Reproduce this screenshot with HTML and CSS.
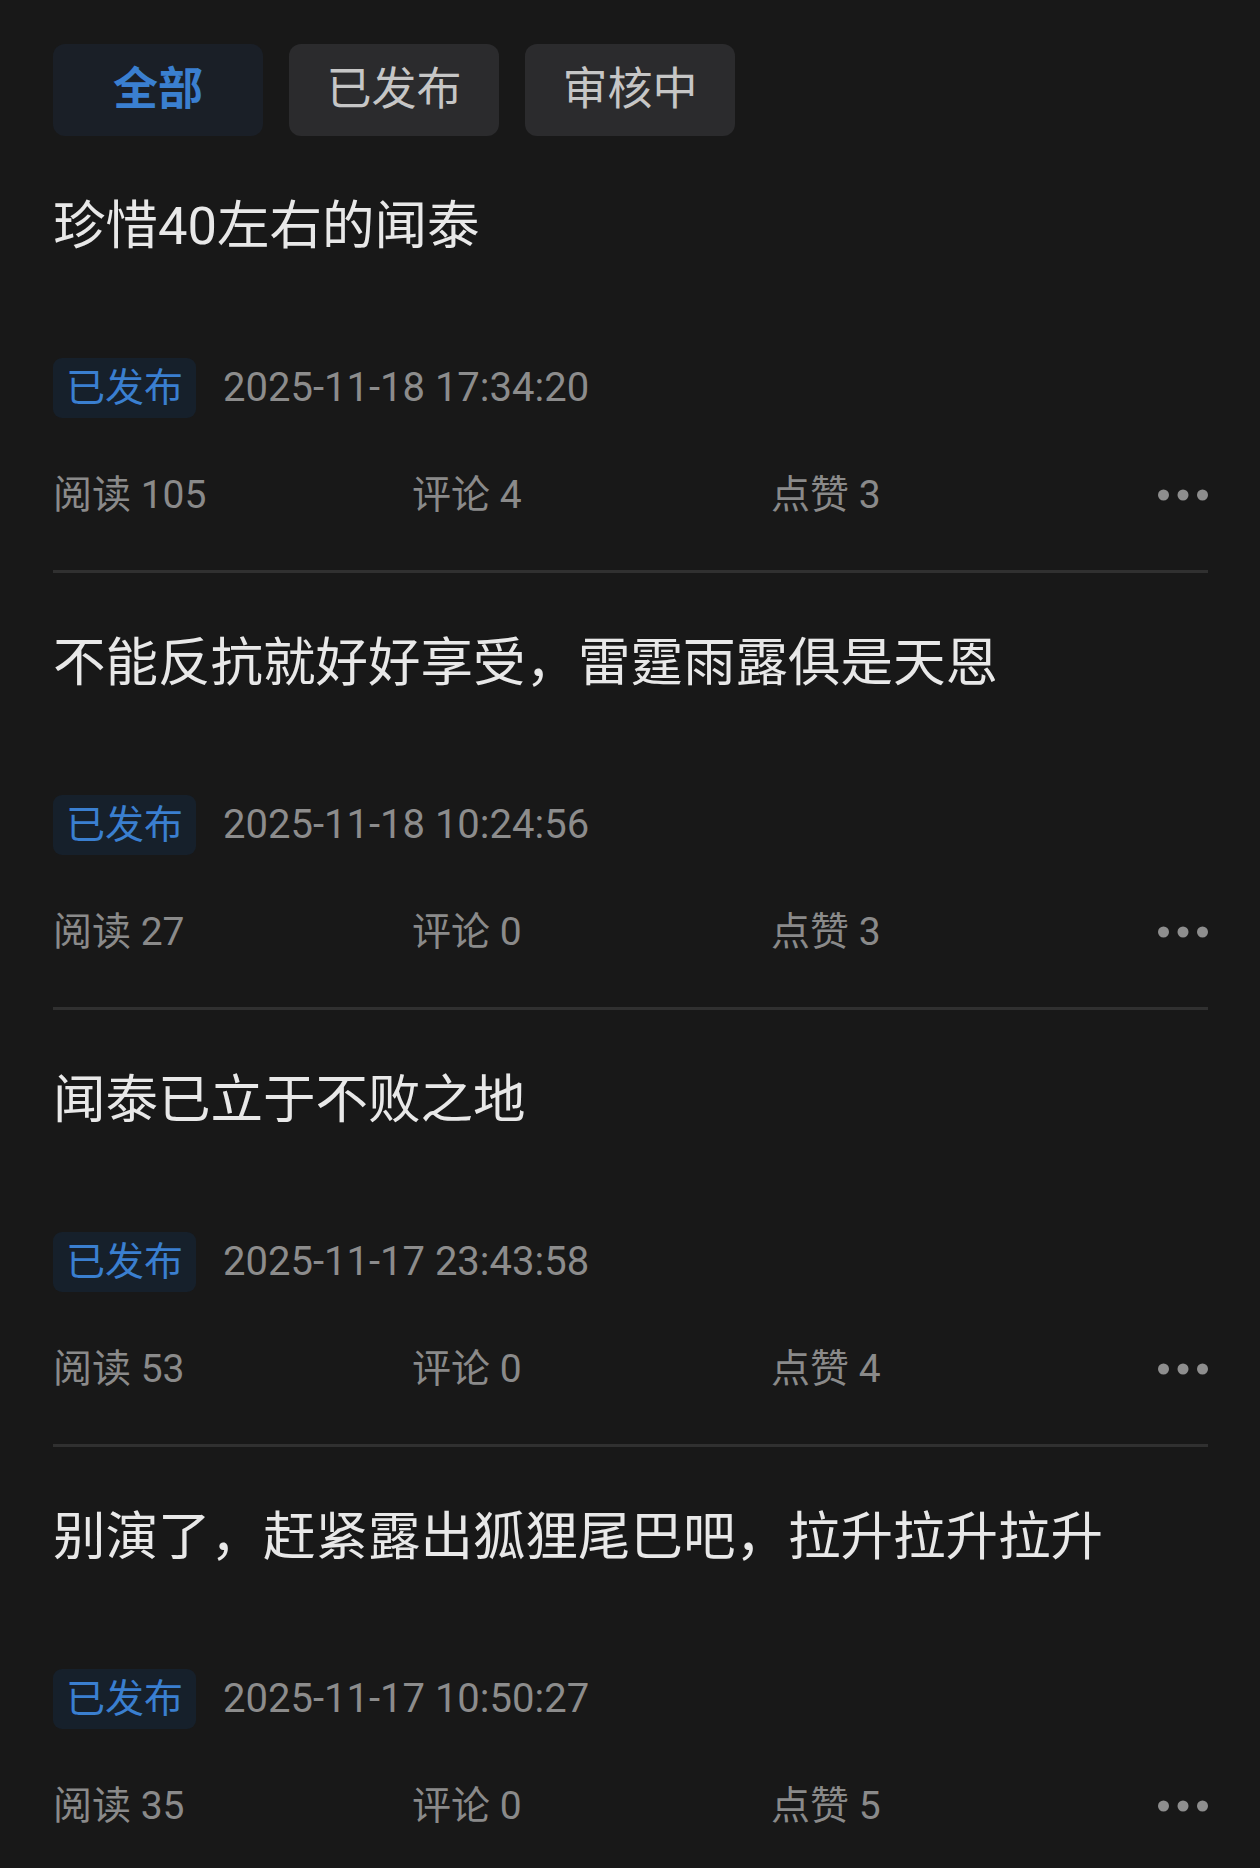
FILE: index.html
```html
<!DOCTYPE html>
<html lang="zh-CN">
<head>
<meta charset="utf-8">
<title>作品列表</title>
<link rel="stylesheet" href="styles.css">
</head>
<body>
<div class="page">
  <div class="tabs">
    <div class="tab tab-active">全部</div>
    <div class="tab">已发布</div>
    <div class="tab">审核中</div>
  </div>

  <div class="item">
    <div class="title">珍惜40左右的闻泰</div>
    <div class="meta"><span class="badge">已发布</span><span class="date">2025-11-18 17:34:20</span></div>
    <div class="stats">
      <span class="stat">阅读 105</span>
      <span class="stat">评论 4</span>
      <span class="stat">点赞 3</span>
      <span class="more"><svg width="50" height="12" viewBox="0 0 50 12"><circle cx="5.5" cy="6" r="5.5"/><circle cx="25" cy="6" r="5.5"/><circle cx="44.5" cy="6" r="5.5"/></svg></span>
    </div>
  </div>

  <div class="item">
    <div class="title">不能反抗就好好享受，雷霆雨露俱是天恩</div>
    <div class="meta"><span class="badge">已发布</span><span class="date">2025-11-18 10:24:56</span></div>
    <div class="stats">
      <span class="stat">阅读 27</span>
      <span class="stat">评论 0</span>
      <span class="stat">点赞 3</span>
      <span class="more"><svg width="50" height="12" viewBox="0 0 50 12"><circle cx="5.5" cy="6" r="5.5"/><circle cx="25" cy="6" r="5.5"/><circle cx="44.5" cy="6" r="5.5"/></svg></span>
    </div>
  </div>

  <div class="item">
    <div class="title">闻泰已立于不败之地</div>
    <div class="meta"><span class="badge">已发布</span><span class="date">2025-11-17 23:43:58</span></div>
    <div class="stats">
      <span class="stat">阅读 53</span>
      <span class="stat">评论 0</span>
      <span class="stat">点赞 4</span>
      <span class="more"><svg width="50" height="12" viewBox="0 0 50 12"><circle cx="5.5" cy="6" r="5.5"/><circle cx="25" cy="6" r="5.5"/><circle cx="44.5" cy="6" r="5.5"/></svg></span>
    </div>
  </div>

  <div class="item">
    <div class="title">别演了，赶紧露出狐狸尾巴吧，拉升拉升拉升</div>
    <div class="meta"><span class="badge">已发布</span><span class="date">2025-11-17 10:50:27</span></div>
    <div class="stats">
      <span class="stat">阅读 35</span>
      <span class="stat">评论 0</span>
      <span class="stat">点赞 5</span>
      <span class="more"><svg width="50" height="12" viewBox="0 0 50 12"><circle cx="5.5" cy="6" r="5.5"/><circle cx="25" cy="6" r="5.5"/><circle cx="44.5" cy="6" r="5.5"/></svg></span>
    </div>
  </div>
</div>
</body>
</html>
```

FILE: styles.css
```css
html, body {
  margin: 0;
  padding: 0;
  background: #181818;
}

body {
  font-family: Roboto, "Noto Sans CJK SC", sans-serif;
  color: #e8e8e8;
}

.page {
  padding: 44px 52px 0 53px;
  min-height: 1868px;
  box-sizing: border-box;
  overflow: hidden;
}

.tabs {
  display: flex;
  gap: 26px;
}

.tab {
  width: 210px;
  height: 92px;
  border-radius: 12px;
  background: #2b2b2d;
  color: #c6c6c6;
  font-size: 45px;
  line-height: 92px;
  text-align: center;
}

.tab-active {
  background: #1a1f27;
  color: #3a7fd0;
  font-weight: 700;
}

.item {
  padding-top: 54px;
  border-bottom: 3px solid #303030;
}

.title {
  font-size: 52.5px;
  line-height: 72px;
  height: 72px;
  color: #e8e8e8;
  white-space: nowrap;
}

.meta {
  margin-top: 96px;
  display: flex;
  align-items: center;
  gap: 27px;
  height: 60px;
}

.badge {
  height: 60px;
  padding: 0 13px;
  border-radius: 9px;
  background: #16202b;
  color: #3a7fd0;
  font-size: 39px;
  line-height: 60px;
}

.date {
  font-size: 40px;
  line-height: 60px;
  color: #8c8c8c;
}

.stats {
  margin-top: 47px;
  margin-bottom: 45px;
  height: 60px;
  display: grid;
  grid-template-columns: 359px 359px 359px 1fr;
  align-items: center;
  font-size: 39px;
  line-height: 60px;
  color: #8a8a8a;
}

.more {
  display: flex;
  justify-content: flex-end;
}

.more svg {
  display: block;
  fill: #8e8e8e;
}
```
